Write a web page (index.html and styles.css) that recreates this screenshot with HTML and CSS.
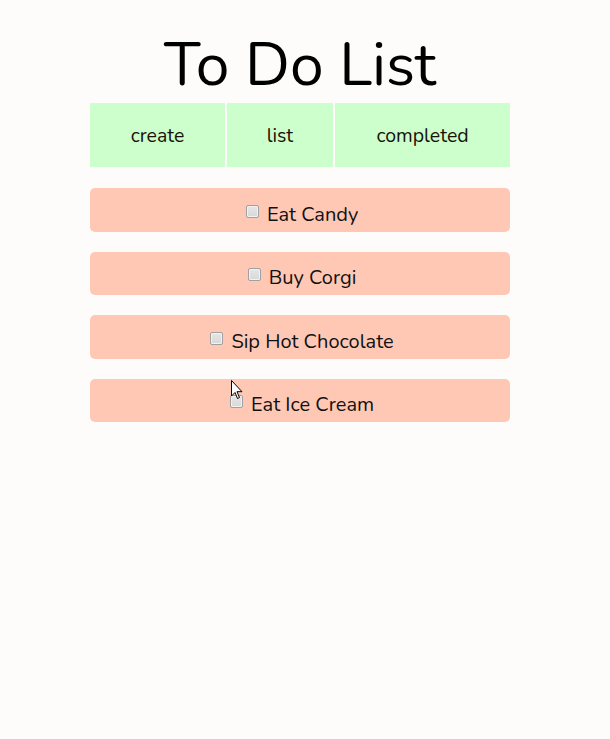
FILE: index.html
```html
<!DOCTYPE html>
<html>
<head>
<meta charset="utf-8">
<link rel="stylesheet" href="styles.css">
</head>
<body>
<div class="app">
  <h1 class="title">To Do List</h1>
  <nav class="tabs">
    <div class="tab tab-create">create</div>
    <div class="tab tab-list">list</div>
    <div class="tab tab-completed">completed</div>
  </nav>
  <ul class="todos">
    <li class="todo"><label><input type="checkbox" class="check"> Eat Candy</label></li>
    <li class="todo"><label><input type="checkbox" class="check"> Buy Corgi</label></li>
    <li class="todo"><label><input type="checkbox" class="check"> Sip Hot Chocolate</label></li>
    <li class="todo"><label><input type="checkbox" class="check"> Eat Ice Cream</label></li>
  </ul>
</div>
<svg class="cursor" width="12" height="20" viewBox="0 0 12 20"><path d="M0.5 0.5 L0.5 16 L4 12.5 L6.5 18.5 L8.5 17.5 L6 11.7 L11 11.7 Z" fill="#fff" stroke="#000" stroke-width="1"/></svg>
</body>
</html>
```
FILE: styles.css
```css
html, body {
  margin: 0;
  padding: 0;
  background: #fdfcfb;
}
body {
  font-family: "Nunito", "Lato", "Open Sans", sans-serif;
  color: #111;
  position: relative;
  height: 739px;
}
.app {
  width: 420px;
  margin: 0 0 0 90px;
  padding-top: 27px;
}
.title {
  margin: 0;
  font-weight: 400;
  font-size: 60.5px;
  line-height: 76px;
  text-align: center;
  color: #000;
}
.tabs {
  display: flex;
  gap: 2px;
  height: 64px;
}
.tab {
  background: #ccffcc;
  display: flex;
  align-items: center;
  justify-content: center;
  font-size: 19.5px;
  color: #1a1208;
  padding-top: 1px;
  box-sizing: border-box;
}
.tab-create { width: 135px; }
.tab-list { width: 106px; }
.tab-completed { flex: 1; }
.todos {
  list-style: none;
  margin: 21px 0 0;
  padding: 0;
  display: flex;
  flex-direction: column;
  gap: 20px;
}
.todo {
  background: #ffc8b4;
  border-radius: 5px;
  height: 43.6px;
  display: flex;
  align-items: flex-end;
  justify-content: center;
  padding-bottom: 4px;
  box-sizing: border-box;
  font-size: 20px;
  color: #111;
}
.check {
  -webkit-appearance: none;
  appearance: none;
  margin: 3px 3px 3px 4px;
  width: 13px;
  height: 13px;
  box-sizing: border-box;
  border: 1px solid #a0a0a0;
  border-radius: 2px;
  background: linear-gradient(#e6e6e6, #d8d8d8);
  box-shadow: inset 0 0 0 1px #f2f2f2;
}
.cursor {
  position: absolute;
  left: 231px;
  top: 380px;
}
```
